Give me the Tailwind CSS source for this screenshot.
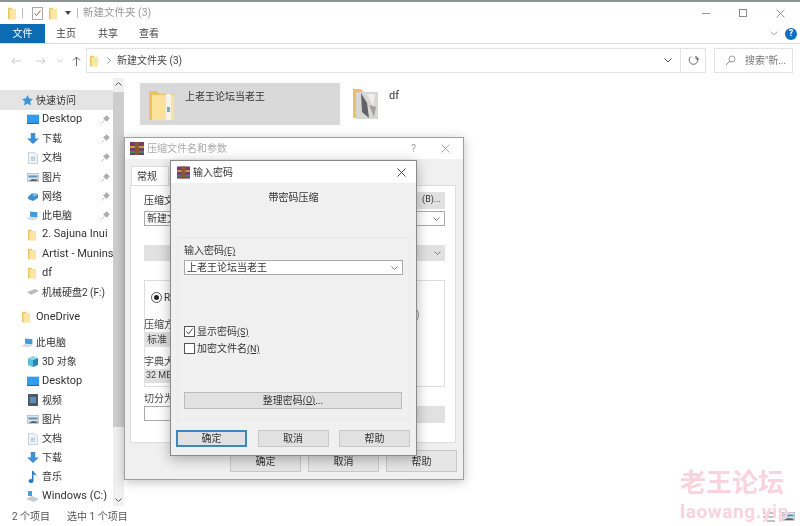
<!DOCTYPE html>
<html lang="zh">
<head>
    <meta charset="UTF-8">
    <title>新建文件夹 (3)</title>
    <script src="https://cdn.jsdelivr.net/npm/@tailwindcss/browser@4"></script>
</head>
<body class="bg-white">
    <svg class="hidden">
        <symbol id="folder" viewBox="0 0 16 16" preserveAspectRatio="none">
            <path d="M0 1h7l2 2h7v12H0z" fill="#e9c766"/>
            <path d="M3 3h13v12H3z" fill="#fbe6a3"/>
        </symbol>
        <symbol id="pc" viewBox="0 0 16 16" preserveAspectRatio="none">
            <path d="M5 2l9 1v7l-9-1z" fill="#3d9be0"/>
            <path d="M0 12l5-3 9 2-4 3z" fill="#d5dbe0"/>
        </symbol>
        <symbol id="desk" viewBox="0 0 16 16" preserveAspectRatio="none">
            <rect x="0" y="1" width="16" height="13" fill="#2f9cee"/>
            <path d="M0 13h16v1.500H0z" fill="#1b6cb0"/>
        </symbol>
        <symbol id="down" viewBox="0 0 16 16" preserveAspectRatio="none"><path d="M5 0h6v8h5l-8 8-8-8h5z" fill="#3f8ed8"/></symbol>
        <symbol id="doc" viewBox="0 0 16 16" preserveAspectRatio="none">
            <path d="M2 .5h8l4 4v11H2z" fill="#f2f5f7" stroke="#a9b4bb" stroke-width=".8"/>
            <path d="M5 7h6M5 9h6M5 11h6" stroke="#7fb0c4" stroke-width=".9"/>
        </symbol>
        <symbol id="pic" viewBox="0 0 16 16" preserveAspectRatio="none">
            <rect x=".5" y="2" width="15" height="12" fill="#dfe6ea" stroke="#98a4ab" stroke-width=".7"/>
            <path d="M2 5h12v3H2z" fill="#5c98c7"/>
            <path d="M2 13l5-3 7 1v2z" fill="#59656c"/>
        </symbol>
        <symbol id="pin" viewBox="0 0 9 9" preserveAspectRatio="none">
            <path d="M5.500.5l3 3-1.200.6-1.500 2.400L2.500 3.200 4.900 1.700zM3.500 5.500L.5 8.500" fill="#aaa" stroke="#aaa" stroke-width=".7"/>
        </symbol>
    </svg>

    <div class="relative h-[526px] w-[800px] overflow-hidden border-t-2 border-[#8b9393] text-[#333] blur-[0.4px]" style="font-family:'Roboto','Noto Sans CJK SC',sans-serif">
        <!-- explorer window -->
        <div class="flex h-[22px] items-center pl-[8px] text-[10px] text-[#999]">
            <svg class="h-[13px] w-[8px]"><use href="#folder"/></svg>
            <div class="ml-[6px] h-[10px] w-px bg-[#bbb]"></div>
            <div class="ml-[9px] flex h-[13px] w-[11px] items-center justify-center border border-[#aaa]">
                <svg class="h-[9px] w-[9px]" viewBox="0 0 9 9"><path d="M1.500 4.500l2 2 4-5" fill="none" stroke="#d0432f" stroke-width="1"/></svg>
            </div>
            <svg class="ml-[6px] h-[13px] w-[8px]"><use href="#folder"/></svg>
            <svg class="ml-[8px] h-[4px] w-[6px]" viewBox="0 0 6 4"><path d="M0 0h6L3 4z" fill="#444"/></svg>
            <div class="ml-[6px] h-[10px] w-px bg-[#bbb]"></div>
            <span class="ml-[5px] text-[10.500px]">新建文件夹 (3)</span>
            <div class="ml-auto flex items-center pr-[15px]">
                <div class="h-px w-[8px] bg-[#999]"></div>
                <div class="ml-[29px] h-[8px] w-[8px] border border-[#888]"></div>
                <svg class="ml-[29px] h-[9px] w-[9px]" viewBox="0 0 9 9"><path d="M.5.5l8 8M8.500.5l-8 8" stroke="#888" stroke-width=".9"/></svg>
            </div>
        </div>

        <div class="flex h-[20px] items-center border-b border-[#dcdcdc] text-[10px] text-[#444]">
            <div class="flex h-[19px] w-[45px] items-center justify-center bg-[#0b6cb4] text-white">文件</div>
            <div class="ml-[11px]">主页</div>
            <div class="ml-[22px]">共享</div>
            <div class="ml-[21px]">查看</div>
            <div class="ml-auto flex items-center pr-[3px]">
                <svg class="h-[5px] w-[8px]" viewBox="0 0 8 5"><path d="M.5.500L4 4l3.500-3.500" fill="none" stroke="#999" stroke-width=".8"/></svg>
                <div class="ml-[7px] flex h-[12px] w-[12px] items-center justify-center rounded-full bg-[#0f6fc0] text-[9px] leading-none font-bold text-white">?</div>
            </div>
        </div>

        <div class="flex h-[34px] items-start pt-[4px] text-[#444]">
            <div class="flex h-[25px] w-[86px] items-center pl-[11px]">
                <svg class="h-[8px] w-[10px]" viewBox="0 0 10 8"><path d="M10 4H1M4 1L1 4l3 3" fill="none" stroke="#ccc"/></svg>
                <svg class="ml-[15px] h-[8px] w-[10px]" viewBox="0 0 10 8"><path d="M0 4h9M6 1l3 3-3 3" fill="none" stroke="#ccc"/></svg>
                <svg class="ml-[11px] h-[4px] w-[6px]" viewBox="0 0 6 4"><path d="M.5.500L3 3 5.500.5" fill="none" stroke="#ccc"/></svg>
                <svg class="ml-[9px] h-[10px] w-[9px]" viewBox="0 0 9 10"><path d="M4.500 10V1M1 4.500L4.500 1 8 4.500" fill="none" stroke="#666"/></svg>
            </div>
            <div class="flex h-[25px] w-[620px] items-center border border-[#e2e2e2] text-[10px]">
                <svg class="ml-[3px] h-[12px] w-[8px]"><use href="#folder"/></svg>
                <svg class="ml-[9px] h-[7px] w-[4px]" viewBox="0 0 4 7"><path d="M.5.500l3 3-3 3" fill="none" stroke="#777" stroke-width=".8"/></svg>
                <span class="ml-[6px]">新建文件夹 (3)</span>
                <svg class="ml-auto mr-[8px] h-[5px] w-[8px]" viewBox="0 0 8 5"><path d="M.5.500L4 4l3.500-3.500" fill="none" stroke="#555"/></svg>
                <div class="flex h-full w-[25px] items-center justify-center border-l border-[#e2e2e2]">
                    <svg class="h-[11px] w-[11px]" viewBox="0 0 11 11"><path d="M3 1.500a4.300 4.300 0 1 0 5 0M8 1v3h3" fill="none" stroke="#666"/></svg>
                </div>
            </div>
            <div class="ml-[8px] flex h-[25px] w-[79px] items-center border border-[#e2e2e2] text-[10px] text-[#777]">
                <svg class="ml-[10px] h-[11px] w-[11px]" viewBox="0 0 11 11"><circle cx="7" cy="4" r="3" fill="none" stroke="#888" stroke-width=".8"/><path d="M5 6L1 10" stroke="#888"/></svg>
                <span class="ml-[9px] whitespace-nowrap">搜索"新...</span>
            </div>
        </div>

        <div class="flex h-[428px]">
            <div class="w-[113px] pt-[12px] text-[10px]">
                <div class="flex h-[20px] items-center bg-[#e4e4e4] pl-[22px]">
                    <svg class="h-[11px] w-[11px]" viewBox="0 0 11 11"><path d="M5.500 0l1.700 3.500 3.800.5-2.800 2.600.8 3.900-3.500-2-3.500 2 .8-3.900L0 4l3.800-.5z" fill="#3d93dc"/></svg>
                    <span class="ml-[3px]">快速访问</span>
                </div>
                <div class="flex h-[19.200px] items-center pl-[27px] text-[11px]"><svg class="h-[11px] w-[12px]"><use href="#desk"/></svg><span class="ml-[3px]">Desktop</span><svg class="ml-auto mr-[3px] h-[9px] w-[9px]"><use href="#pin"/></svg></div>
                <div class="flex h-[19.200px] items-center pl-[27px]"><svg class="h-[11px] w-[12px]"><use href="#down"/></svg><span class="ml-[3px]">下载</span><svg class="ml-auto mr-[3px] h-[9px] w-[9px]"><use href="#pin"/></svg></div>
                <div class="flex h-[19.200px] items-center pl-[27px]"><svg class="h-[12px] w-[12px]"><use href="#doc"/></svg><span class="ml-[3px]">文档</span><svg class="ml-auto mr-[3px] h-[9px] w-[9px]"><use href="#pin"/></svg></div>
                <div class="flex h-[19.200px] items-center pl-[27px]"><svg class="h-[11px] w-[12px]"><use href="#pic"/></svg><span class="ml-[3px]">图片</span><svg class="ml-auto mr-[3px] h-[9px] w-[9px]"><use href="#pin"/></svg></div>
                <div class="flex h-[19.200px] items-center pl-[27px]"><svg class="h-[11px] w-[12px]" viewBox="0 0 12 11"><path d="M1 6l4-4 6 1v4l-5 3-5-2z" fill="#3f8fc9"/><path d="M5 2l2 4 4-3" fill="#8ac3ea"/></svg><span class="ml-[3px]">网络</span><svg class="ml-auto mr-[3px] h-[9px] w-[9px]"><use href="#pin"/></svg></div>
                <div class="flex h-[19.200px] items-center pl-[26px]"><svg class="h-[12px] w-[13px]"><use href="#pc"/></svg><span class="ml-[3px]">此电脑</span><svg class="ml-auto mr-[3px] h-[9px] w-[9px]"><use href="#pin"/></svg></div>
                <div class="flex h-[19.200px] items-center pl-[28px] text-[11px]"><svg class="h-[12px] w-[8px]"><use href="#folder"/></svg><span class="ml-[6px] whitespace-nowrap">2. Sajuna Inui</span></div>
                <div class="flex h-[19.200px] items-center overflow-hidden pl-[28px] text-[11px]"><svg class="h-[12px] w-[8px] shrink-0"><use href="#folder"/></svg><span class="ml-[6px] whitespace-nowrap">Artist - Muninsl</span></div>
                <div class="flex h-[19.200px] items-center pl-[28px] text-[11px]"><svg class="h-[12px] w-[8px]"><use href="#folder"/></svg><span class="ml-[6px]">df</span></div>
                <div class="flex h-[19.200px] items-center pl-[27px]"><svg class="h-[6px] w-[12px]" viewBox="0 0 12 6"><path d="M0 3l8-3 4 2-8 4z" fill="#bdbdbd"/></svg><span class="ml-[3px] whitespace-nowrap">机械硬盘2 (F:)</span></div>
                <div class="mt-[6px] flex h-[19.200px] items-center pl-[22px] text-[11px]"><svg class="h-[12px] w-[8px]"><use href="#folder"/></svg><span class="ml-[6px]">OneDrive</span></div>
                <div class="mt-[6px] flex h-[19.200px] items-center pl-[21px]"><svg class="h-[12px] w-[13px]"><use href="#pc"/></svg><span class="ml-[2px]">此电脑</span></div>
                <div class="flex h-[19.200px] items-center pl-[27px]"><svg class="h-[11px] w-[12px]" viewBox="0 0 12 11"><path d="M1 2l5-2 5 2-5 2z" fill="#8fd4ea"/><path d="M1 2l5 2v7L1 9z" fill="#5dbcdc"/><path d="M11 2L6 4v7l5-2z" fill="#2a87b5"/></svg><span class="ml-[3px]">3D 对象</span></div>
                <div class="flex h-[19.200px] items-center pl-[27px] text-[11px]"><svg class="h-[11px] w-[12px]"><use href="#desk"/></svg><span class="ml-[3px]">Desktop</span></div>
                <div class="flex h-[19.200px] items-center pl-[27px]"><svg class="h-[12px] w-[12px]" viewBox="0 0 12 12"><rect x="1" width="10" height="12" fill="#4e5a63"/><rect x="3" y="3" width="6" height="6" fill="#5a8fc0"/></svg><span class="ml-[3px]">视频</span></div>
                <div class="flex h-[19.200px] items-center pl-[27px]"><svg class="h-[11px] w-[12px]"><use href="#pic"/></svg><span class="ml-[3px]">图片</span></div>
                <div class="flex h-[19.200px] items-center pl-[27px]"><svg class="h-[12px] w-[12px]"><use href="#doc"/></svg><span class="ml-[3px]">文档</span></div>
                <div class="flex h-[19.200px] items-center pl-[27px]"><svg class="h-[11px] w-[12px]"><use href="#down"/></svg><span class="ml-[3px]">下载</span></div>
                <div class="flex h-[19.200px] items-center pl-[27px]"><svg class="h-[12px] w-[12px]" viewBox="0 0 12 12"><path d="M5 0h1.500c.3 2 3 2.500 3 5-.8-1-2-1.500-3-1.500V10a2.500 2 0 1 1-1.500-1.800z" fill="#2a7fc4"/></svg><span class="ml-[3px]">音乐</span></div>
                <div class="flex h-[19.200px] items-center pl-[26px] text-[11px]"><svg class="h-[11px] w-[13px]" viewBox="0 0 13 11"><path d="M0 8l6-3 7 3-5 3z" fill="#c4ccd1"/><path d="M2 0h4v5H2z" fill="#3fa5d8"/></svg><span class="ml-[3px] whitespace-nowrap">Windows (C:)</span></div>
            </div>

            <div class="flex w-[11px] flex-col items-center bg-[#f0f0f0]">
                <svg class="mt-[4px] h-[4px] w-[7px]" viewBox="0 0 7 4"><path d="M.5 3.500L3.500.5l3 3" fill="none" stroke="#555"/></svg>
                <div class="mt-[6px] h-[335px] w-full bg-[#cdcdcd]"></div>
                <svg class="mt-auto mb-[4px] h-[4px] w-[7px]" viewBox="0 0 7 4"><path d="M.5.500l3 3 3-3" fill="none" stroke="#555"/></svg>
            </div>

            <div class="flex-1 pt-[5px] pl-[16px]">
                <div class="flex items-start">
                    <div class="flex h-[42px] w-[200px] items-start bg-[#d9d9d9] pl-[9px] pt-[6px] text-[10px]">
                        <svg class="h-[33px] w-[25px]" viewBox="0 0 25 33"><path d="M0 2h8l3 3h14v26H0z" fill="#e6c465"/><path d="M3 6h22v25H3z" fill="#fae29b"/><path d="M17 5h5v26h-5z" fill="#f5f3ea"/><path d="M18 18h3v5h-3z" fill="#7fa8c2"/></svg>
                        <span class="ml-[11px]">上老王论坛当老王</span>
                    </div>
                    <div class="flex pl-[13px] pt-[4px] text-[10px]">
                        <svg class="h-[34px] w-[25px]" viewBox="0 0 25 34"><path d="M0 2h8l3 3h14v26H0z" fill="#e6c465"/><path d="M3 5h22v27H3z" fill="#d9d7d3"/><path d="M8 6l6 10 2 15-7-6z" fill="#5f6468"/><path d="M14 7h8l-2 12z" fill="#f3eee9"/><path d="M16 18l7 2-2 10z" fill="#a69ea0"/></svg>
                        <span class="ml-[11px] mt-[1px] text-[11px]">df</span>
                    </div>
                </div>
            </div>
        </div>

        <div class="flex h-[20px] items-center text-[10px] text-[#555]">
            <span class="ml-[12px]">2 个项目</span>
            <span class="ml-[17px]">选中 1 个项目</span>
        </div>

        <!-- 压缩文件名和参数 dialog -->
        <div class="absolute left-[124px] top-[135px] h-[343px] w-[340px] border border-[#a0a0a0] bg-[#f0f0f0] text-[10px] shadow-[0_2px_10px_rgba(0,0,0,0.25)]">
            <div class="flex h-[21px] items-center bg-white pl-[5px] pr-[13px] text-[#aaa]">
                <svg class="h-[13px] w-[14px]" viewBox="0 0 14 13"><rect width="14" height="13" fill="#7a3a6e"/><path d="M0 4h14v2H0z" fill="#c9a13f"/><path d="M0 9h14v2H0z" fill="#3f8f55"/><rect x="5" width="4" height="13" fill="#8b5a2b"/></svg>
                <span class="ml-[3px]">压缩文件名和参数</span>
                <span class="ml-auto text-[#999]">?</span>
                <svg class="ml-[25px] h-[9px] w-[9px]" viewBox="0 0 9 9"><path d="M.5.5l8 8M8.500.5l-8 8" stroke="#aaa"/></svg>
            </div>
            <div class="ml-[6px] mt-[7px] flex h-[19px] w-[38px] items-center border border-b-0 border-[#ddd] bg-white pl-[5px]">常规</div>
            <div class="ml-[5px] mr-[7px] h-[258px] border border-[#ddd] bg-white pl-[13px] pr-[10px] pt-[5px]">
                <div class="flex h-[18px] items-center justify-between">
                    <span>压缩文件名(A)</span>
                    <div class="flex h-[17px] w-[62px] items-center justify-end bg-[#e1e1e1] pr-[4px] text-[9px]">(B)...</div>
                </div>
                <div class="mt-[2px] flex h-[15px] items-center justify-between border border-[#aaa] pl-[2px] pr-[4px]">
                    <span>新建文件夹</span>
                    <svg class="h-[4px] w-[7px]" viewBox="0 0 7 4"><path d="M.5.500l3 3 3-3" fill="none" stroke="#777"/></svg>
                </div>
                <div class="mt-[19px] flex h-[16px] items-center justify-end bg-[#e1e1e1] pr-[4px]">
                    <svg class="h-[4px] w-[7px]" viewBox="0 0 7 4"><path d="M.5.500l3 3 3-3" fill="none" stroke="#777"/></svg>
                </div>
                <div class="relative mt-[19px] h-[107px] border border-[#ddd] pl-[6px] pt-[9px]">
                    <div class="flex items-center"><span class="flex h-[11px] w-[11px] items-center justify-center rounded-full border border-[#555]"><span class="h-[5px] w-[5px] rounded-full bg-[#222]"></span></span><span class="ml-[2px]">RAR</span></div>
                    <span class="absolute left-[271px] top-[26px] text-[#888]">)</span>
                </div>
            </div>
            <div class="flex justify-end pr-[6px] pt-[7px]">
                <div class="flex h-[22px] w-[71px] items-center justify-center border border-[#c8c8c8] bg-[#e6e6e6]">确定</div>
                <div class="ml-[7px] flex h-[22px] w-[71px] items-center justify-center border border-[#c8c8c8] bg-[#e6e6e6]">取消</div>
                <div class="ml-[7px] flex h-[22px] w-[71px] items-center justify-center border border-[#c8c8c8] bg-[#e6e6e6]">帮助</div>
            </div>
        </div>
        <!-- lower-left fields poking out from under the password dialog -->
        <div class="absolute left-[144px] top-[315px] w-[30px] overflow-hidden text-[10px] text-[#444]">
            <div class="h-[14px] whitespace-nowrap">压缩方</div>
            <div class="mt-[1px] flex h-[15px] items-center whitespace-nowrap bg-[#e1e1e1] pl-[3px]">标准</div>
            <div class="mt-[7px] h-[14px] whitespace-nowrap">字典大</div>
            <div class="mt-[1px] flex h-[14px] items-center whitespace-nowrap bg-[#e1e1e1] pl-[2px] text-[9px]">32 MB</div>
            <div class="mt-[8px] h-[14px] whitespace-nowrap">切分为</div>
            <div class="mt-[1px] h-[15px] border border-[#aaa] bg-white"></div>
        </div>
        <div class="absolute left-[416px] top-[404px] h-[17px] w-[29px] bg-[#e1e1e1]"></div>

        <!-- 输入密码 dialog -->
        <div class="absolute left-[170px] top-[158px] h-[296px] w-[247px] border border-[#8a8a8a] bg-[#f0f0f0] text-[10px] text-[#333] shadow-[0_3px_12px_rgba(0,0,0,0.3)]">
            <div class="flex h-[22px] items-center bg-white pl-[6px] pr-[10px]">
                <svg class="h-[13px] w-[13px]" viewBox="0 0 14 13"><rect width="14" height="13" fill="#7a3a6e"/><path d="M0 4h14v2H0z" fill="#c9a13f"/><path d="M0 9h14v2H0z" fill="#3f8f55"/><rect x="5" width="4" height="13" fill="#8b5a2b"/></svg>
                <span class="ml-[3px]">输入密码</span>
                <svg class="ml-auto h-[9px] w-[9px]" viewBox="0 0 9 9"><path d="M.5.5l8 8M8.500.5l-8 8" stroke="#444"/></svg>
            </div>
            <div class="flex h-[29px] items-center justify-center">带密码压缩</div>
            <div class="mx-[6px] mt-[25px] h-[183px] border border-[#e8e8e8] px-[6px] pt-[5px]">
                <div class="h-[15px]">输入密码<span class="text-[9px] underline">(E)</span></div>
                <div class="mt-[2px] flex h-[15px] items-center justify-between border border-[#aaa] bg-white pl-[2px] pr-[4px]">
                    <span>上老王论坛当老王</span>
                    <svg class="h-[4px] w-[7px]" viewBox="0 0 7 4"><path d="M.5.500l3 3 3-3" fill="none" stroke="#777"/></svg>
                </div>
                <div class="mt-[48px] flex h-[17px] items-center">
                    <span class="flex h-[11px] w-[11px] items-center justify-center border border-[#555] bg-white">
                        <svg class="h-[7px] w-[7px]" viewBox="0 0 7 7"><path d="M.5 3.500l2 2.500 4-5.500" fill="none" stroke="#444"/></svg>
                    </span>
                    <span class="ml-[2px]">显示密码<span class="text-[9px] underline">(S)</span></span>
                </div>
                <div class="flex h-[17px] items-center">
                    <span class="h-[11px] w-[11px] border border-[#555] bg-white"></span>
                    <span class="ml-[2px]">加密文件名<span class="text-[9px] underline">(N)</span></span>
                </div>
                <div class="mr-px mt-[35px] flex h-[17px] items-center justify-center border border-[#bbb] bg-[#e1e1e1]">整理密码<span class="text-[9px] underline">(O)</span>...</div>
            </div>
            <div class="flex justify-between pl-[5px] pr-[6px] pt-[10px]">
                <div class="flex h-[17px] w-[71px] items-center justify-center border-2 border-[#3f87b8] bg-[#e1e1e1]">确定</div>
                <div class="flex h-[17px] w-[71px] items-center justify-center border border-[#c8c8c8] bg-[#e1e1e1]">取消</div>
                <div class="flex h-[17px] w-[71px] items-center justify-center border border-[#c8c8c8] bg-[#e1e1e1]">帮助</div>
            </div>
        </div>

        <!-- view toggles and watermark -->
        <div class="absolute left-[763px] top-[509px] flex items-center">
            <svg class="h-[10px] w-[12px]" viewBox="0 0 12 10"><path d="M0 1h2M4 1h8M0 5h2M4 5h8M0 9h2M4 9h8" stroke="#888"/></svg>
            <svg class="ml-[7px] h-[11px] w-[13px]"><use href="#pic"/></svg>
        </div>
        <div class="absolute left-[680px] top-[463px] font-bold text-[#f9d3de]">
            <div class="text-[26px] leading-[36px] whitespace-nowrap">老王论坛</div>
            <div class="text-[19px] leading-[22px] tracking-[0.6px] whitespace-nowrap">laowang.yip</div>
        </div>
    </div>
</body>
</html>
